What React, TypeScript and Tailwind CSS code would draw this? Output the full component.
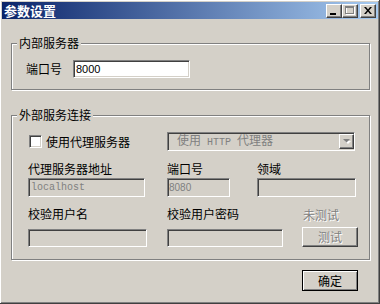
const SUNKEN =
  'border border-t-[#808080] border-l-[#808080] border-b-white border-r-white shadow-[inset_1px_1px_0_#404040,inset_-1px_-1px_0_#d4d0c8]'
const RAISED =
  'border border-t-white border-l-white border-b-[#404040] border-r-[#404040] shadow-[inset_-1px_-1px_0_#808080]'
const GREY = 'text-[#808080] [text-shadow:1px_1px_0_#fff]'

function GroupBox({ title, className, children }: { title: string; className: string; children: React.ReactNode }) {
  return (
    <div className={`relative w-[359px] border border-[#808080] shadow-[inset_1px_1px_0_#fff,1px_1px_0_#fff] ${className}`}>
      <span className="absolute left-[5px] top-[-8px] bg-[#d4d0c8] px-[2px] text-[12px] leading-[14px]">{title}</span>
      {children}
    </div>
  )
}

function TitleButton({ children, className = '' }: { children: React.ReactNode; className?: string }) {
  return (
    <div className={`w-[16px] h-[14px] bg-[#d4d0c8] flex items-center justify-center ${RAISED} ${className}`}>
      {children}
    </div>
  )
}

export default function App() {
  return (
    <div className="w-[380px] h-[304px] bg-[#d4d0c8] p-[2px] flex flex-col text-black font-['Noto_Sans_CJK_SC','Liberation_Sans',sans-serif] shadow-[inset_-1px_-1px_0_#404040,inset_1px_1px_0_#fff,inset_-2px_-2px_0_#808080]">
      {/* Title bar */}
      <div className="h-[17px] flex items-center justify-between pl-[2px] pr-[2px] bg-[linear-gradient(to_right,#0a246a,#a6caf0)]">
        <span className="text-white font-bold text-[13px] leading-[15px]">参数设置</span>
        <div className="flex items-center">
          <TitleButton>
            <svg width="8" height="8" viewBox="0 0 8 8">
              <rect x="0" y="6" width="6" height="2" fill="#000" />
            </svg>
          </TitleButton>
          <TitleButton>
            <svg width="10" height="9" viewBox="0 0 10 9">
              <rect x="1.5" y="1.5" width="8" height="7" fill="none" stroke="#fff" />
              <rect x="0.5" y="0.5" width="8" height="7" fill="none" stroke="#808080" />
              <rect x="0" y="0" width="9" height="2" fill="#808080" />
            </svg>
          </TitleButton>
          <TitleButton className="ml-[2px]">
            <svg width="8" height="7" viewBox="0 0 8 7">
              <path d="M0 0h2l2 2.5L6 0h2L5 3.5 8 7H6L4 4.5 2 7H0l3-3.5z" fill="#000" />
            </svg>
          </TitleButton>
        </div>
      </div>

      <div className="flex flex-col pl-[9px]">
        {/* Internal server */}
        <GroupBox title="内部服务器" className="mt-[24px] h-[47px]">
          <div className="flex items-center pt-[16px] pl-[14px]">
            <span className="w-[47px] text-[12px] leading-[14px]">端口号</span>
            <div className={`w-[117px] h-[18px] bg-white flex items-center pl-[2px] ${SUNKEN}`}>
              <span className="font-['Liberation_Sans',sans-serif] text-[11px] leading-[12px]">8000</span>
            </div>
          </div>
        </GroupBox>

        {/* External connection */}
        <GroupBox title="外部服务连接" className="mt-[25px] h-[145px]">
          <div className="flex items-center pt-[16px]">
            <div className="w-[155px] pl-[17px] flex items-center">
              <div className={`w-[13px] h-[13px] bg-white ${SUNKEN}`} />
              <span className="ml-[4px] text-[12px] leading-[14px]">使用代理服务器</span>
            </div>
            <div className={`w-[188px] h-[19px] bg-[#d4d0c8] flex items-center justify-between ${SUNKEN}`}>
              <span className="pl-[9px] text-[12px] leading-[14px] text-[#808080] whitespace-pre">
                使用<span className="font-['Liberation_Mono',monospace] text-[10px]"> HTTP </span>代理器
              </span>
              <div className={`w-[15px] h-[15px] bg-[#d4d0c8] flex items-center justify-center ${RAISED}`}>
                <svg width="8" height="5" viewBox="0 0 8 5">
                  <path d="M1 1h6L4 4z" fill="#fff" transform="translate(1 1)" />
                  <path d="M0 0h7L3.5 3.5z" fill="#808080" />
                </svg>
              </div>
            </div>
          </div>

          <div className="flex mt-[11px] pl-[16px]">
            <div className="w-[139px] flex flex-col">
              <span className="text-[12px] leading-[14px]">代理服务器地址</span>
              <div className={`mt-[2px] w-[117px] h-[19px] bg-[#d4d0c8] flex items-center pl-[2px] ${SUNKEN}`}>
                <span className="font-['Liberation_Mono',monospace] text-[10px] leading-[12px] text-[#808080]">localhost</span>
              </div>
            </div>
            <div className="w-[90px] flex flex-col">
              <span className="text-[12px] leading-[14px]">端口号</span>
              <div className={`mt-[2px] w-[63px] h-[19px] bg-[#d4d0c8] flex items-center pl-[1px] ${SUNKEN}`}>
                <span className="font-['Liberation_Sans',sans-serif] text-[10px] leading-[12px] text-[#808080]">8080</span>
              </div>
            </div>
            <div className="flex flex-col">
              <span className="text-[12px] leading-[14px]">领域</span>
              <div className={`mt-[2px] w-[99px] h-[19px] bg-[#d4d0c8] ${SUNKEN}`} />
            </div>
          </div>

          <div className="flex items-end mt-[10px] pl-[16px]">
            <div className="w-[139px] flex flex-col">
              <span className="text-[12px] leading-[14px]">校验用户名</span>
              <div className={`mt-[8px] w-[119px] h-[18px] bg-[#d4d0c8] ${SUNKEN}`} />
            </div>
            <div className="w-[135px] flex flex-col">
              <span className="text-[12px] leading-[14px]">校验用户密码</span>
              <div className={`mt-[8px] w-[116px] h-[18px] bg-[#d4d0c8] ${SUNKEN}`} />
            </div>
            <div className="flex flex-col">
              <span className={`pl-[1px] text-[12px] leading-[14px] ${GREY}`}>未测试</span>
              <div className={`mt-[5px] w-[56px] h-[20px] bg-[#d4d0c8] flex items-center justify-center ${RAISED}`}>
                <span className={`text-[12px] leading-[14px] ${GREY}`}>测试</span>
              </div>
            </div>
          </div>
        </GroupBox>

        <div className="flex justify-end pr-[20px] mt-[10px]">
          <div className="w-[56px] h-[21px] border border-black bg-[#d4d0c8] flex items-center justify-center shadow-[inset_1px_1px_0_#fff,inset_-1px_-1px_0_#808080]">
            <span className="text-[12px] leading-[14px]">确定</span>
          </div>
        </div>
      </div>
    </div>
  )
}
